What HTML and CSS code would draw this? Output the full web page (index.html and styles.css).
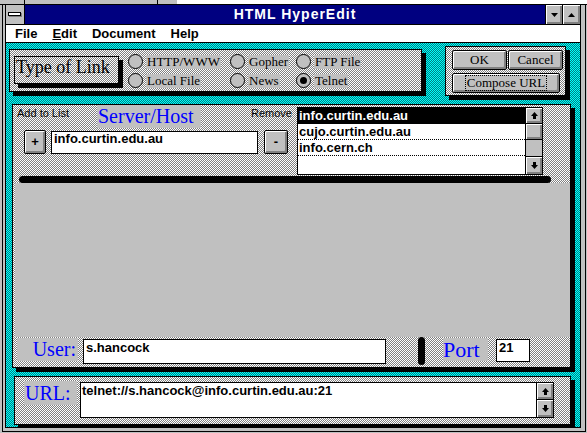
FILE: index.html
```html
<!DOCTYPE html>
<html lang="en">
  <head>
    <meta charset="UTF-8" />
    <title>HTML HyperEdit</title>
    <link rel="stylesheet" href="styles.css">
  </head>
  <body>
    <div class="screen">
      <!-- window lying behind, only its bottom edge shows -->
      <div class="behind">
        <div class="behind-frame"></div>
        <div class="behind-win"></div>
      </div>

      <div class="win">
        <div class="win-ring">
          <div class="win-inner">
            <div class="titlebar">
              <div class="sysbox"><span class="sysbar"></span></div>
              <div class="title">HTML HyperEdit</div>
              <div class="tbtn"><svg width="7" height="4"><polygon points="0,0 7,0 3.5,4" /></svg></div>
              <div class="tbtn max"><svg width="7" height="4"><polygon points="0,4 7,4 3.5,0" /></svg></div>
            </div>
            <div class="menubar">
              <span>File</span>
              <span><u>E</u>dit</span>
              <span>Document</span>
              <span>Help</span>
            </div>

            <div class="client">
              <div class="row-top">
                <div class="panel dither type-panel">
                  <div class="type-label dither">Type of Link</div>
                  <div class="radios">
                    <div class="radio-col col-a">
                      <div class="radio"><span class="dot"></span><span class="rlbl">HTTP/WWW</span></div>
                      <div class="radio"><span class="dot"></span><span class="rlbl">Local File</span></div>
                    </div>
                    <div class="radio-col col-b">
                      <div class="radio"><span class="dot"></span><span class="rlbl">Gopher</span></div>
                      <div class="radio"><span class="dot"></span><span class="rlbl">News</span></div>
                    </div>
                    <div class="radio-col">
                      <div class="radio"><span class="dot"></span><span class="rlbl">FTP File</span></div>
                      <div class="radio"><span class="dot on"></span><span class="rlbl">Telnet</span></div>
                    </div>
                  </div>
                </div>

                <div class="panel dither btn-panel">
                  <div class="btn-row">
                    <div class="btn wide">OK</div>
                    <div class="btn wide">Cancel</div>
                  </div>
                  <div class="btn compose"><span class="focus">Compose URL</span></div>
                </div>
              </div>

              <div class="panel dither main-panel">
                <div class="main-top">
                  <div class="host-group">
                    <div class="lbl-row">
                      <span class="small add-lbl">Add to List</span>
                      <span class="big host-lbl">Server/Host</span>
                      <span class="small rem-lbl">Remove</span>
                    </div>
                    <div class="in-row">
                      <div class="btn sq plus">+</div>
                      <div class="field host-field">info.curtin.edu.au</div>
                      <div class="btn sq minus">-</div>
                    </div>
                  </div>
                  <div class="listbox">
                    <div class="items">
                      <div class="item sel">info.curtin.edu.au</div>
                      <div class="item">cujo.curtin.edu.au</div>
                      <div class="item">info.cern.ch</div>
                      <div class="item last"></div>
                    </div>
                    <div class="sb">
                      <div class="sb-btn sb-up"><svg width="7" height="7"><polygon points="3.5,0 7,4 5,4 5,7 2,7 2,4 0,4" /></svg></div>
                      <div class="sb-thumb"></div>
                      <div class="sb-track"></div>
                      <div class="sb-btn sb-down"><svg width="7" height="7"><polygon points="3.5,7 7,3 5,3 5,0 2,0 2,3 0,3" /></svg></div>
                    </div>
                  </div>
                </div>
                <div class="bar"></div>
                <div class="solid"></div>
                <div class="user-row">
                  <div class="big user-lbl">User:</div>
                  <div class="field user-field">s.hancock</div>
                  <div class="vbar"></div>
                  <div class="big port-lbl">Port</div>
                  <div class="field port-field">21</div>
                </div>
              </div>

              <div class="panel dither url-panel">
                <div class="big url-lbl">URL:</div>
                <div class="url-box">
                  <div class="url-text">telnet://s.hancock@info.curtin.edu.au:21</div>
                  <div class="url-sb">
                    <div class="sb-btn url-up"><svg width="7" height="7"><polygon points="3.5,0 7,4 5,4 5,7 2,7 2,4 0,4" /></svg></div>
                    <div class="sb-btn url-down"><svg width="7" height="7"><polygon points="3.5,7 7,3 5,3 5,0 2,0 2,3 0,3" /></svg></div>
                  </div>
                </div>
              </div>
            </div>
          </div>
        </div>
      </div>
    </div>
  </body>
</html>
```

FILE: styles.css
```css
* {
  box-sizing: border-box;
}

body {
  margin: 0;
  font-family: "Liberation Sans", Arial, sans-serif;
}

.screen {
  width: 587px;
  height: 433px;
  overflow: hidden;
  background: #c0c0c0;
}

/* the window behind */
.behind {
  display: flex;
  height: 4px;
  background: #fff;
  overflow: hidden;
}

.behind-frame {
  width: 177px;
  flex: none;
  background: linear-gradient(to right, #c0c0c0 24px, #000 24px, #000 25px, #c0c0c0 25px, #c0c0c0 157px, #000 157px, #000 158px, #c0c0c0 158px);
}

.behind-win {
  flex: 1;
  background: #fff;
}

/* window frame */
.win {
  border-top: 1px solid #000;
  background: #c0c0c0;
  padding: 0 1px 1px 2px;
}

.win-ring {
  border: 1px solid #000;
  border-top: 0;
  padding: 0 4px 3px 2px;
}

.win-inner {
  border: 1px solid #000;
  border-top: 0;
}

.titlebar {
  display: flex;
  height: 20px;
  border-bottom: 1px solid #000;
}

.sysbox {
  width: 19px;
  background: #c0c0c0;
  border-right: 1px solid #000;
  display: flex;
  align-items: center;
  justify-content: center;
}

.sysbar {
  width: 13px;
  height: 4px;
  background: #fff;
  border: 1px solid #000;
  box-shadow: 1px 1px #808080;
  margin: 0 1px 1px 0;
}

.title {
  flex: 1;
  background: #000080;
  color: #fff;
  font: bold 14px/19px "Liberation Sans", sans-serif;
  letter-spacing: 1px;
  text-align: center;
  padding-left: 20px;
}

.tbtn {
  width: 17px;
  border-left: 1px solid #000;
  background: #c0c0c0;
  box-shadow: inset 1px 1px #fff, inset -2px -2px #808080;
  display: flex;
  align-items: center;
  justify-content: center;
}

.tbtn.max {
  width: 18px;
}

.menubar {
  display: flex;
  gap: 15px;
  height: 18px;
  padding-left: 9px;
  background: #fff;
  border-bottom: 1px solid #000;
  font: bold 13px/17px "Liberation Sans", sans-serif;
}

/* client area */
.client {
  height: 384px;
  padding-top: 3px;
  overflow: hidden;
  background: repeating-conic-gradient(#00ffff 0 25%, #008080 0 50%) 0 0 / 2px 2px;
}

.dither {
  background: repeating-conic-gradient(#808080 0 25%, #fff 0 50%) 0 0 / 2px 2px;
}

.panel {
  border: 1px solid #000;
  box-shadow: 4px 4px 0 #000;
}

.row-top {
  display: flex;
  align-items: flex-start;
}

.type-panel {
  display: flex;
  align-items: flex-start;
  width: 413px;
  height: 43px;
  margin: 3px 0 0 3px;
}

.type-label {
  width: 105px;
  height: 28px;
  margin: 6px 0 0 4px;
  padding-left: 1px;
  border: 1px solid #000;
  box-shadow: 4px 4px 0 #000;
  font: 18px/20px "Liberation Serif", serif;
}

.radios {
  display: flex;
  margin: 4px 0 0 9px;
}

.radio-col {
  display: flex;
  flex-direction: column;
  gap: 4px;
}

.col-a {
  width: 102px;
}

.col-b {
  width: 66px;
}

.radio {
  display: flex;
  align-items: center;
  height: 15px;
}

.dot {
  flex: none;
  width: 15px;
  height: 15px;
  border: 1px solid #000;
  border-radius: 50%;
  background: #c0c0c0;
}

.dot.on {
  display: flex;
  align-items: center;
  justify-content: center;
}

.dot.on::after {
  content: "";
  width: 7px;
  height: 7px;
  border-radius: 50%;
  background: #000;
}

.rlbl {
  margin-left: 3px;
  padding: 0 1px;
  background: #c0c0c0;
  font: 13px/14px "Liberation Serif", serif;
}

/* OK / Cancel / Compose */
.btn-panel {
  width: 121px;
  height: 50px;
  margin-left: 23px;
  padding: 3px 0 0 6px;
}

.btn-row {
  display: flex;
  gap: 1px;
}

.btn {
  height: 20px;
  border: 1px solid #000;
  border-radius: 2px;
  background: #c0c0c0;
  box-shadow: inset 1px 1px #fff, inset -2px -2px #808080;
  font: 13px/18px "Liberation Serif", serif;
  text-align: center;
}

.btn.wide {
  width: 55px;
}

.btn.compose {
  width: 108px;
  margin-top: 3px;
}

.focus {
  display: inline-block;
  border: 1px dotted #000;
  padding: 0 1px;
  line-height: 14px;
}

/* server / host */
.main-panel {
  display: flex;
  flex-direction: column;
  width: 559px;
  height: 264px;
  margin: 8px 0 0 6px;
}

.main-top {
  display: flex;
  height: 71px;
}

.host-group {
  width: 284px;
}

.lbl-row {
  display: flex;
  align-items: flex-start;
  height: 23px;
}

.small {
  margin-top: 2px;
  font: 11px/13px "Liberation Sans", sans-serif;
}

.add-lbl {
  width: 84px;
  padding-left: 4px;
}

.big {
  background: #c0c0c0;
  color: #0000ff;
  font: 20px/23px "Liberation Serif", serif;
}

.host-lbl {
  width: 104px;
  height: 23px;
  padding-left: 1px;
}

.rem-lbl {
  margin-left: 50px;
}

.in-row {
  display: flex;
  align-items: flex-start;
  margin-top: 2px;
}

.btn.sq {
  width: 22px;
  height: 24px;
  margin-left: 11px;
  font: bold 13px/21px "Liberation Sans", sans-serif;
}

.btn.minus {
  width: 24px;
  margin-left: 6px;
}

.field {
  background: #fff;
  border: 1px solid #000;
  padding: 1px 2px 0;
  font: bold 13px/14px "Liberation Sans", sans-serif;
  white-space: nowrap;
  overflow: hidden;
}

.host-field {
  width: 207px;
  height: 23px;
  margin: 1px 0 0 5px;
  padding-top: 0;
}

.listbox {
  display: flex;
  width: 246px;
  height: 68px;
  margin-top: 2px;
  border: 1px solid #000;
  background: #fff;
}

.items {
  flex: 1;
}

.item {
  height: 16px;
  padding-left: 1px;
  border-bottom: 1px dotted #000;
  font: bold 13px/15px "Liberation Sans", sans-serif;
}

.item.sel {
  background: #000;
  color: #fff;
}

.item.last {
  border-bottom: 0;
}

.sb,
.url-sb {
  display: flex;
  flex-direction: column;
  width: 17px;
  border-left: 1px solid #000;
  background: #c0c0c0;
}

.sb-btn,
.sb-thumb {
  display: flex;
  align-items: center;
  justify-content: center;
  background: #c0c0c0;
  box-shadow: inset 1px 1px #fff, inset -2px -2px #808080;
}

.sb-up,
.sb-thumb {
  height: 16px;
  border-bottom: 1px solid #000;
}

.sb-track {
  flex: 1;
}

.sb-down {
  height: 18px;
  border-top: 1px solid #000;
}

.bar {
  width: 532px;
  height: 7px;
  margin-left: 6px;
  border-radius: 4px;
  background: #000;
}

.solid {
  height: 154px;
  margin-left: 2px;
  background: #c0c0c0;
}

.user-row {
  display: flex;
  align-items: flex-start;
  height: 30px;
}

.user-lbl {
  width: 61px;
  height: 23px;
  margin: 1px 0 0 4px;
  padding-right: 2px;
  text-align: right;
}

.user-field {
  width: 303px;
  height: 25px;
  margin: 2px 0 0 5px;
}

.vbar {
  width: 7px;
  height: 28px;
  margin-left: 32px;
  border-radius: 4px;
  background: #000;
}

.port-lbl {
  width: 45px;
  height: 23px;
  margin: 1px 0 0 18px;
  font-size: 22px;
}

.port-field {
  width: 34px;
  height: 23px;
  margin: 2px 0 0 8px;
}

/* URL */
.url-panel {
  display: flex;
  align-items: flex-start;
  width: 557px;
  height: 49px;
  margin: 8px 0 0 8px;
}

.url-lbl {
  width: 53px;
  height: 24px;
  margin: 4px 0 0 9px;
  padding-left: 1px;
  line-height: 24px;
}

.url-box {
  display: flex;
  width: 474px;
  height: 36px;
  margin: 5px 0 0 3px;
  border: 1px solid #000;
  background: #fff;
}

.url-text {
  flex: 1;
  padding: 1px 2px 0 1px;
  font: bold 13px/14px "Liberation Sans", sans-serif;
  white-space: nowrap;
}

.url-up {
  height: 17px;
  border-bottom: 1px solid #000;
}

.url-down {
  flex: 1;
}
```
